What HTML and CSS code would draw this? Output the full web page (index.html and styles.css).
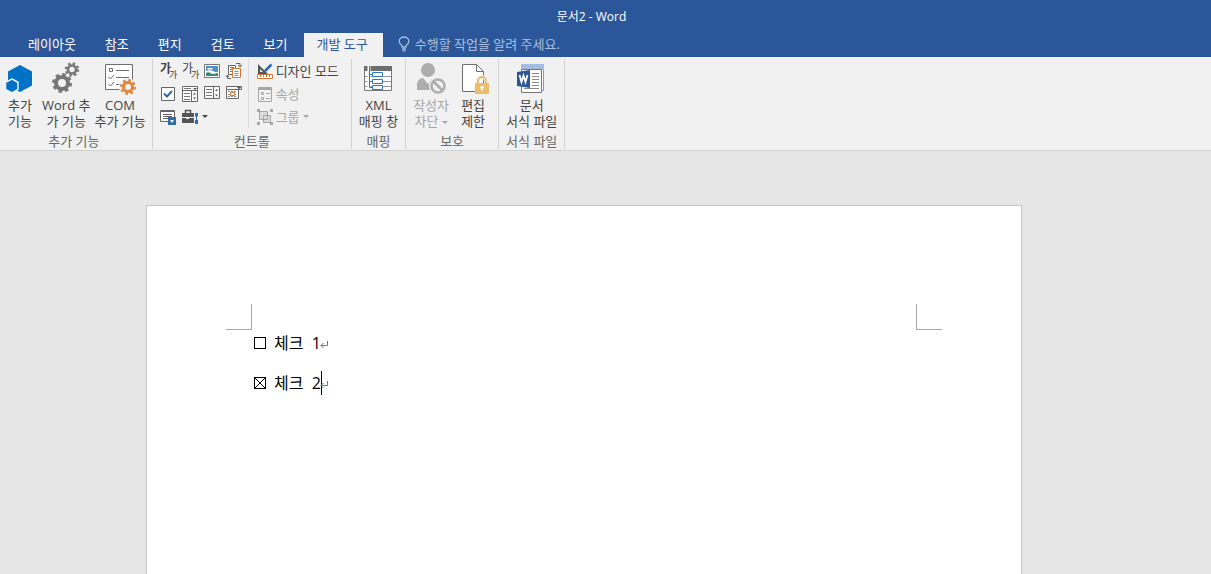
FILE: index.html
```html
<!DOCTYPE html>
<html lang="ko">
<head>
    <meta charset="UTF-8">
    <meta name="viewport" content="width=device-width, initial-scale=1.0">
    <title>문서2 - Word</title>
    <link rel="stylesheet" href="styles.css">
</head>

<body>

<header class="title-bar">
    <h1>문서2 - Word</h1>
</header>

<nav class="tabs">
    <button class="tab">레이아웃</button>
    <button class="tab">참조</button>
    <button class="tab">편지</button>
    <button class="tab">검토</button>
    <button class="tab">보기</button>
    <button class="tab active">개발 도구</button>
    <button class="tell-me">
        <svg width="12" height="16" viewBox="0 0 12 16" fill="none" stroke="currentColor" stroke-width="1.3">
            <path d="M4 11V9.5C2.5 8.500 1.200 7.300 1.200 5.300a4.800 4.300 0 0 1 9.600 0C10.800 7.300 9.500 8.500 8 9.500V11zM4 13h4M4.500 14.800h3"/>
        </svg>
        <span>수행할 작업을 알려 주세요.</span>
    </button>
</nav>

<div class="ribbon">
    <section class="group group-addins">
        <div class="tools">
            <button class="big-btn">
                <svg width="32" height="32" viewBox="0 0 32 32">
                    <path fill="#0072c6" d="M16 3l12 6.500v14L16 30 4 23.500v-14z"/>
                    <path fill="#0072c6" stroke="#f1f1f1" stroke-width="1.500" d="M8 17l6 3.300v7L8 31l-6.500-3.700v-7z"/>
                </svg>
                <span>추가<br>기능</span>
            </button>
            <button class="big-btn">
                <svg width="32" height="32" viewBox="0 0 32 32" fill="none" stroke="#777">
                    <circle cx="12" cy="21" r="6" stroke-width="4"/>
                    <circle cx="12" cy="21" r="8.500" stroke-width="3" stroke-dasharray="3.400 3.276"/>
                    <circle cx="22" cy="7.500" r="4" stroke-width="2.600"/>
                    <circle cx="22" cy="7.500" r="6" stroke-width="2.400" stroke-dasharray="2.400 2.312"/>
                </svg>
                <span>Word 추<br>가 기능</span>
            </button>
            <button class="big-btn">
                <svg width="32" height="32" viewBox="0 0 32 32" fill="none">
                    <path fill="#fff" stroke="#6e6e6e" d="M1.500 2.500h27v25h-27z"/>
                    <path stroke="#6e6e6e" d="M5.500 6.500h3v3h-3zM12 8.500h13M12 15.500h13M12 22.500h6M4.500 15l2 2 3.500-4M4.500 22l2 2 3.500-4"/>
                    <circle cx="24" cy="25" r="5.500" fill="#fff" stroke="#f1f1f1" stroke-width="7"/>
                    <circle cx="24" cy="25" r="4.500" fill="#f1f1f1" stroke="#e0873c" stroke-width="3"/>
                    <circle cx="24" cy="25" r="6.600" stroke="#e0873c" stroke-width="2.800" stroke-dasharray="2.600 2.584"/>
                </svg>
                <span>COM<br>추가 기능</span>
            </button>
        </div>
        <h2>추가 기능</h2>
    </section>

    <section class="group group-controls">
        <div class="tools">
            <div class="icon-grid">
                <button class="icon-btn" aria-label="서식 있는 텍스트">
                    <svg width="18" height="20" viewBox="0 0 18 20" fill="#444">
                        <text x="0" y="12" font-size="12" font-weight="700">가</text>
                        <text x="9" y="17" font-size="9">가</text>
                    </svg>
                </button>
                <button class="icon-btn" aria-label="일반 텍스트">
                    <svg width="18" height="20" viewBox="0 0 18 20" fill="#444">
                        <text x="0" y="12" font-size="12">가</text>
                        <text x="9" y="17" font-size="9">가</text>
                    </svg>
                </button>
                <button class="icon-btn" aria-label="그림">
                    <svg width="18" height="18" viewBox="0 0 18 18">
                        <path fill="#fff" stroke="#777" d="M.500 2.500h15v13H.500z"/>
                        <path fill="#4f8fc9" d="M2 4h12v6H2z"/>
                        <path fill="#fff" d="M4 6h4l1 1.500H3zM2 9l4-1 8 3v1H2z"/>
                        <path fill="#3c8876" d="M2 14v-3c3-2 5 1 7 1s3-1 5-1v3z"/>
                    </svg>
                </button>
                <button class="icon-btn" aria-label="문서 블록 갤러리">
                    <svg width="18" height="18" viewBox="0 0 18 18" fill="none">
                        <path fill="#fff" stroke="#666" d="M2.500 3.500h7v9h-7z"/>
                        <path stroke="#4f7fb8" d="M4 5.500h4M4 7.500h4M4 9.500h4"/>
                        <path fill="#fff" stroke="#cf7a39" d="M6.500 6.500h8v9h-8z"/>
                        <path stroke="#cf7a39" d="M8.500 9.500h4M8.500 11.500h4M8.500 13.500h4"/>
                        <path stroke="#666" d="M10 1.500h4v3M12 3l2 2 2-2M5 16.500H1.500v-3M0 15l1.500-2L3 15"/>
                    </svg>
                </button>
                <button class="icon-btn" aria-label="확인란">
                    <svg width="18" height="18" viewBox="0 0 18 18">
                        <path fill="#fff" stroke="#666" d="M1.500 2.500h13v13h-13z"/>
                        <path fill="none" stroke="#2f6cab" stroke-width="2" d="M4 8.500l3 3L12 6"/>
                    </svg>
                </button>
                <button class="icon-btn" aria-label="콤보 상자">
                    <svg width="18" height="18" viewBox="0 0 18 18" fill="none">
                        <path fill="#fff" stroke="#666" d="M.500 1.500h15v4H.500zM.500 5.500h9v11h-9zM9.500 5.500h6v11h-6z"/>
                        <path stroke="#777" d="M2 3.500h7M2 8.500h6M2 11.500h6M2 14.500h6"/>
                        <path fill="#555" d="M11 3h4l-2 2zM11 9.500h3l-1.500-2zM11 12.500h3l-1.500 2z"/>
                    </svg>
                </button>
                <button class="icon-btn" aria-label="드롭다운 목록">
                    <svg width="18" height="18" viewBox="0 0 18 18" fill="none">
                        <path fill="#fff" stroke="#666" d="M.500 1.500h9v12h-9zM9.500 1.500h6v12h-6z"/>
                        <path stroke="#777" d="M2 4.500h6M2 7.500h6M2 10.500h6"/>
                        <path fill="#555" d="M11 6h3l-1.500-2zM11 9.500h3l-1.500 2z"/>
                    </svg>
                </button>
                <button class="icon-btn" aria-label="날짜 선택">
                    <svg width="18" height="18" viewBox="0 0 18 18" fill="none">
                        <path fill="#fff" stroke="#666" d="M.500 4.500h12v9H.500z"/>
                        <path fill="#fff" stroke="#666" d="M.500 1.500h15v3H.500z"/>
                        <path stroke="#888" stroke-dasharray="2 1" d="M2 6.500h9M2 9.500h9M2 11.500h9"/>
                        <path fill="#fff" stroke="#cf7a39" d="M4.500 7.500h4v3h-4z"/>
                        <path fill="#555" d="M11 2h4l-2 2.500z"/>
                    </svg>
                </button>
                <button class="icon-btn" aria-label="반복 구역">
                    <svg width="18" height="18" viewBox="0 0 18 18" fill="none">
                        <path fill="#fff" stroke="#666" d="M.500 2.500h14v11H.500z"/>
                        <path stroke="#666" d="M0 3.500h15M3 6.500h9M3 8.500h9M3 10.500h5"/>
                        <path fill="#2f6cab" d="M8 9h8v8H8z"/>
                        <path fill="#fff" d="M10 12h4l-2 3z"/>
                    </svg>
                </button>
                <button class="icon-btn legacy" aria-label="이전 도구">
                    <svg width="18" height="18" viewBox="0 0 18 18">
                        <path fill="#555" d="M0 5h12v4H0zM0 10h4v1h3v-1h5v5H0z"/>
                        <path fill="none" stroke="#555" stroke-width="1.500" d="M3.500 5V2.500h5V5"/>
                        <path fill="#2f6cab" d="M13 5h3v3l-1 1v3h1v4h-3v-4h1V9l-1-1z"/>
                    </svg>
                    <i class="arrow"></i>
                </button>
            </div>
            <div class="side-list">
                <button class="row-btn">
                    <svg width="16" height="16" viewBox="0 0 16 16" fill="none">
                        <path fill="#555" d="M1 1l10 10H1zM3 6v3h3z" fill-rule="evenodd"/>
                        <path stroke="#2f6cab" stroke-width="2.500" d="M14.500 1.500L8 8"/>
                        <path fill="#2f6cab" d="M6 10l1-3 2 2z"/>
                        <path fill="#fff" stroke="#cf7a39" d="M.500 11.500h15v4H.500z"/>
                        <path stroke="#cf7a39" d="M3.500 12v2M6.500 12v2M9.500 12v2M12.500 12v2"/>
                    </svg>
                    <span>디자인 모드</span>
                </button>
                <button class="row-btn" disabled>
                    <svg width="16" height="16" viewBox="0 0 16 16" fill="none" stroke="#a6a6a6">
                        <path d="M1.500 1.500h13v14h-13zM1 2.500h14M1 3.500h14M4.500 6.500h2v2h-2zM4.500 11.500h2v2h-2zM9 7.500h4M9 12.500h4"/>
                    </svg>
                    <span>속성</span>
                </button>
                <button class="row-btn" disabled>
                    <svg width="16" height="16" viewBox="0 0 16 16" fill="none">
                        <path fill="#dcdcdc" stroke="#a6a6a6" d="M2.500 2.500h8v8h-8zM6.500 6.500h7v7h-7z"/>
                        <path fill="#a6a6a6" d="M0 0h3v3H0zM13 0h3v3h-3zM0 13h3v3H0zM13 13h3v3h-3z"/>
                    </svg>
                    <span>그룹</span>
                    <i class="arrow"></i>
                </button>
            </div>
        </div>
        <h2>컨트롤</h2>
    </section>

    <section class="group">
        <div class="tools">
            <button class="big-btn">
                <svg width="32" height="32" viewBox="0 0 32 32" fill="none">
                    <path fill="#fff" stroke="#777" d="M2.500 4.500h27v24h-27z"/>
                    <path fill="#6e6e6e" d="M2 4h28v5H2z"/>
                    <path stroke="#999" d="M3 14.500h26M3 19.500h26M3 24.500h26"/>
                    <path stroke="#fff" stroke-width="3" d="M7 4v23"/>
                    <path stroke="#2f78bd" d="M7.500 4v21.500h4M7.500 12.500h4M7.500 19.500h4"/>
                    <path fill="#fff" stroke="#2f78bd" d="M10.500 10.500h10v4h-10zM10.500 17.500h10v4h-10zM10.500 23.500h10v4h-10z"/>
                </svg>
                <span>XML<br>매핑 창</span>
            </button>
        </div>
        <h2>매핑</h2>
    </section>

    <section class="group">
        <div class="tools">
            <button class="big-btn" disabled>
                <svg width="32" height="32" viewBox="0 0 32 32" fill="#a6a6a6">
                    <circle cx="13" cy="8" r="7"/>
                    <path d="M2 28v-5c0-4 3-7 6-7l5 6 4-5c2 0 5 2 6 5l-5 6z"/>
                    <circle cx="23" cy="24" r="9" fill="#f1f1f1"/>
                    <circle cx="23" cy="24" r="6.500" fill="#f1f1f1" stroke="#a6a6a6" stroke-width="2.500"/>
                    <path stroke="#a6a6a6" stroke-width="2.500" d="M18.500 19.500l9 9"/>
                </svg>
                <span>작성자<br>차단 <i class="arrow"></i></span>
            </button>
            <button class="big-btn">
                <svg width="32" height="32" viewBox="0 0 32 32">
                    <path fill="#fff" stroke="#6e6e6e" d="M5.500 2.500h14l7 7v20h-21z"/>
                    <path fill="none" stroke="#6e6e6e" d="M19.500 2.500v7h7"/>
                    <path fill="none" stroke="#f1f1f1" stroke-width="4" d="M21 22v-3a4 4 0 0 1 8 0v3"/>
                    <path fill="#eabf6b" d="M18 21h14v11H18z"/>
                    <path fill="none" stroke="#eabf6b" stroke-width="2" d="M21 22v-3a4 4 0 0 1 8 0v3"/>
                    <path fill="#fff" d="M23.500 24h3v2l-1 1v2h-1v-2l-1-1z"/>
                </svg>
                <span>편집<br>제한</span>
            </button>
        </div>
        <h2>보호</h2>
    </section>

    <section class="group">
        <div class="tools">
            <button class="big-btn">
                <svg width="32" height="32" viewBox="0 0 32 32">
                    <path fill="#fff" stroke="#7c9cc9" d="M8.500 2.500h19v26h-19z"/>
                    <path fill="#a3bde3" d="M5 2h23v6H5z"/>
                    <path fill="#fff" stroke="#777" d="M5.500 7.500h20v23h-20z"/>
                    <path stroke="#8a8a8a" d="M16 11.500h7M16 14.500h7M16 17.500h7M16 20.500h7M16 23.500h7M8 26.500h15"/>
                    <path fill="#2b579a" d="M1 10l13-2v18L1 24z"/>
                    <path fill="none" stroke="#fff" stroke-width="1.800" d="M3.500 13l2 7 2-6.500 2 6.500 2-7"/>
                </svg>
                <span>문서<br>서식 파일</span>
            </button>
        </div>
        <h2>서식 파일</h2>
    </section>
</div>

<main class="workspace">
    <article class="page">
        <div class="crop-marks">
            <i class="crop-left"></i>
            <i class="crop-right"></i>
        </div>
        <p>
            <input type="checkbox" id="check1">
            <label for="check1">체크&nbsp; 1</label>
            <svg class="mark" width="8" height="8" viewBox="0 0 8 8" fill="none" stroke="#777"><path d="M6.500 0v4.500H0M2.500 2L0 4.500 2.500 7"/></svg>
        </p>
        <p>
            <input type="checkbox" id="check2" checked>
            <label for="check2">체크&nbsp; 2</label>
            <i class="caret"></i>
            <svg class="mark" width="8" height="8" viewBox="0 0 8 8" fill="none" stroke="#777"><path d="M6.500 0v4.500H0M2.500 2L0 4.500 2.500 7"/></svg>
        </p>
    </article>
</main>

</body>
</html>
```

FILE: styles.css
```css
* {
    box-sizing: border-box;
    margin: 0;
    padding: 0;
}

body {
    display: flex;
    flex-direction: column;
    min-height: 100vh;
    background: #e6e6e6;
    color: #444;
    font: 13px/16px "Open Sans", "Noto Sans CJK KR", sans-serif;
}

button {
    border: none;
    background: none;
    color: inherit;
    font: inherit;
    white-space: nowrap;
}

button:disabled {
    color: #a6a6a6;
}

svg {
    display: block;
    flex: none;
    overflow: visible;
}

/* Title bar and tabs */
.title-bar {
    height: 33px;
    padding: 9px 28px 0 0;
    background: #2b579a;
    color: #fff;
    text-align: center;
}

.title-bar h1 {
    font-size: 12px;
    font-weight: 400;
}

.tabs {
    display: flex;
    gap: 3px;
    height: 24px;
    padding-left: 15px;
    background: #2b579a;
    color: #fff;
}

.tab {
    padding: 0 13px 2px;
}

.tab.active {
    padding-right: 15px;
    background: #f1f1f1;
    color: #2b579a;
}

.tell-me {
    display: flex;
    align-items: center;
    gap: 5px;
    padding: 0 0 2px 12px;
    color: #a9bedd;
}

/* Ribbon */
.ribbon {
    display: flex;
    height: 94px;
    padding: 2px 0 1px;
    background: #f1f1f1;
    border-bottom: 1px solid #d2d2d2;
}

.group {
    display: flex;
    flex-direction: column;
    justify-content: space-between;
    padding: 0 5px;
    border-right: 1px solid #d2d2d2;
}

.group h2 {
    color: #666;
    font-size: 13px;
    font-weight: 400;
    text-align: center;
}

.group-addins {
    padding: 0 4px 0 0;
}

.tools {
    display: flex;
    gap: 2px;
}

.group-addins .tools,
.group-controls .tools {
    gap: 0;
}

.big-btn {
    display: flex;
    flex-direction: column;
    align-items: center;
    gap: 3px;
    min-width: 40px;
    padding: 3px 2px 0;
}

.big-btn:disabled svg {
    opacity: 0.9;
}

.arrow {
    display: inline-block;
    border: 3px solid transparent;
    border-top-color: currentColor;
    border-bottom: none;
    vertical-align: middle;
}

.icon-grid {
    display: grid;
    grid-template-columns: repeat(4, 22px);
    grid-auto-rows: 23px;
    padding-right: 2px;
    border-right: 1px solid #dcdcdc;
}

.icon-btn {
    display: flex;
    align-items: center;
    gap: 2px;
    padding-left: 2px;
}

.legacy {
    grid-column: span 2;
}

.side-list {
    display: grid;
    grid-auto-rows: 23px;
    padding: 0 7px 0 8px;
}

.row-btn {
    display: flex;
    align-items: center;
    gap: 3px;
}

/* Document */
.workspace {
    display: flex;
    flex: 1;
    justify-content: center;
    padding: 54px 43px 0 0;
}

.page {
    width: 100%;
    max-width: 876px;
    padding: 98px 79px 0;
    background: #fff;
    border: 1px solid #c6c6c6;
    border-bottom: none;
    color: #000;
    font-size: 16px;
    line-height: 26px;
}

.crop-marks {
    display: flex;
    justify-content: space-between;
}

.crop-marks i {
    width: 26px;
    height: 26px;
    border-bottom: 1px solid #a6a6a6;
}

.crop-marks .crop-left {
    border-right: 1px solid #a6a6a6;
}

.crop-marks .crop-right {
    border-left: 1px solid #a6a6a6;
}

.page p {
    display: flex;
    align-items: center;
    margin-bottom: 14px;
    padding-left: 28px;
}

.page input {
    appearance: none;
    width: 12px;
    height: 12px;
    margin-right: 8px;
    border: 1px solid #000;
}

.page input:checked {
    background:
        linear-gradient(45deg, transparent 46%, #000 46%, #000 54%, transparent 54%),
        linear-gradient(135deg, transparent 46%, #000 46%, #000 54%, transparent 54%);
}

.mark {
    margin-top: 4px;
}

.caret {
    width: 1px;
    height: 24px;
    margin-right: -1px;
    background: #000;
}
```
